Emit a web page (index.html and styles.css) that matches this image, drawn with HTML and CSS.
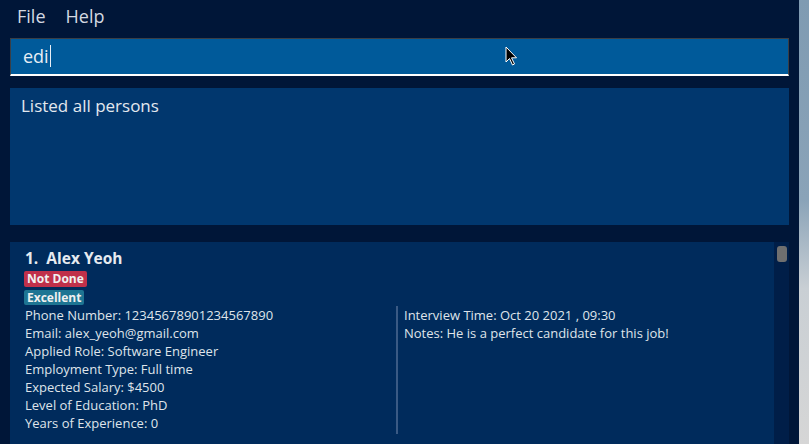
FILE: index.html
```html
<!DOCTYPE html>
<html>
<head>
<meta charset="utf-8">
<link rel="stylesheet" href="styles.css">
</head>
<body>
<div class="screen">
  <div class="window">
    <div class="menubar">
      <span class="menu-item">File</span>
      <span class="menu-item">Help</span>
    </div>
    <div class="pane">
      <div class="command-box"><span class="command-text">edi</span><span class="caret"></span></div>
      <div class="result-box">Listed all persons</div>
      <div class="list">
        <div class="card">
          <div class="name">1.&nbsp; Alex Yeoh</div>
          <div class="badges">
            <span class="badge badge-red">Not Done</span>
            <span class="badge badge-teal">Excellent</span>
          </div>
          <div class="details">
            <div class="col col-left">
              <div>Phone Number: 12345678901234567890</div>
              <div>Email: alex_yeoh@gmail.com</div>
              <div>Applied Role: Software Engineer</div>
              <div>Employment Type: Full time</div>
              <div>Expected Salary: $4500</div>
              <div>Level of Education: PhD</div>
              <div>Years of Experience: 0</div>
            </div>
            <div class="col col-right">
              <div>Interview Time: Oct 20 2021 , 09:30</div>
              <div>Notes: He is a perfect candidate for this job!</div>
            </div>
          </div>
        </div>
        <div class="scrolltrack"><div class="thumb"></div></div>
      </div>
    </div>
    <svg class="cursor" width="14" height="21" viewBox="0 0 14 21">
      <path d="M1 1 L1 16 L4.5 12.5 L7.5 19 L9.5 18 L6.5 11.8 L11.5 11.8 Z" fill="#000" stroke="#fff" stroke-width="1"/>
    </svg>
  </div>
  <div class="desktop"></div>
</div>
</body>
</html>
```

FILE: styles.css
```css
html, body {
  margin: 0;
  padding: 0;
  width: 809px;
  height: 444px;
  overflow: hidden;
  font-family: "Open Sans", "Noto Sans", sans-serif;
}
.screen {
  display: flex;
  width: 809px;
  height: 444px;
}
.window {
  position: relative;
  width: 799px;
  height: 444px;
  background: #001638;
  display: flex;
  flex-direction: column;
  overflow: hidden;
}
.desktop {
  flex: 1;
  background: linear-gradient(#7f9bb2 0%, #8aa3b8 45%, #c9cfd4 65%, #d6d6d6 100%);
}
.menubar {
  height: 38px;
  flex: none;
  display: flex;
  align-items: center;
  padding-left: 17px;
  gap: 20px;
  box-sizing: border-box;
  padding-bottom: 6px;
}
.menu-item {
  color: #d3d9e2;
  font-size: 18px;
}
.pane {
  padding: 0 10px;
  display: flex;
  flex-direction: column;
  flex: 1;
  min-height: 0;
}
.command-box {
  height: 38px;
  flex: none;
  box-sizing: border-box;
  background: #005a9a;
  border: 1px solid #3a3f46;
  border-bottom: 2px solid #ffffff;
  display: flex;
  align-items: center;
  padding-left: 12px;
  padding-bottom: 1px;
}
.command-text {
  color: #e8eef5;
  font-size: 18px;
}
.caret {
  display: inline-block;
  width: 1px;
  height: 22px;
  background: #e8eef5;
  margin-left: 1px;
}
.result-box {
  margin-top: 12px;
  height: 137px;
  flex: none;
  box-sizing: border-box;
  background: #01376e;
  color: #e3e8ee;
  font-size: 17px;
  padding: 6px 11px;
}
.list {
  margin-top: 17px;
  flex: 1;
  display: flex;
  min-height: 0;
}
.card {
  flex: 1;
  background: #002b5c;
  padding: 4px 0 0 15px;
  color: #dfe4ea;
}
.name {
  font-size: 15.5px;
  font-weight: 700;
  line-height: 24px;
  color: #e6eaf0;
}
.badges {
  display: flex;
  flex-direction: column;
  align-items: flex-start;
  gap: 3px;
  margin-left: -1px;
  margin-top: 1px;
}
.badge {
  font-size: 12px;
  font-weight: 700;
  color: #f0f0f0;
  padding: 0 3px;
  border-radius: 2px;
  line-height: 16px;
}
.badge-red {
  background: #c0304a;
}
.badge-teal {
  background: #1e7593;
  line-height: 15px;
}
.details {
  display: flex;
  font-size: 13px;
  line-height: 18px;
  margin-top: 1px;
}
.col-left {
  width: 371px;
  border-right: 2px solid #3a5a84;
  padding-bottom: 2px;
}
.col-right {
  padding-left: 6px;
}
.scrolltrack {
  width: 15px;
  background: #001e48;
}
.thumb {
  margin: 4px 0 0 3px;
  width: 10px;
  height: 16px;
  border-radius: 3px;
  background: #6f6f6f;
}
.cursor {
  position: absolute;
  left: 505px;
  top: 46px;
}
```
